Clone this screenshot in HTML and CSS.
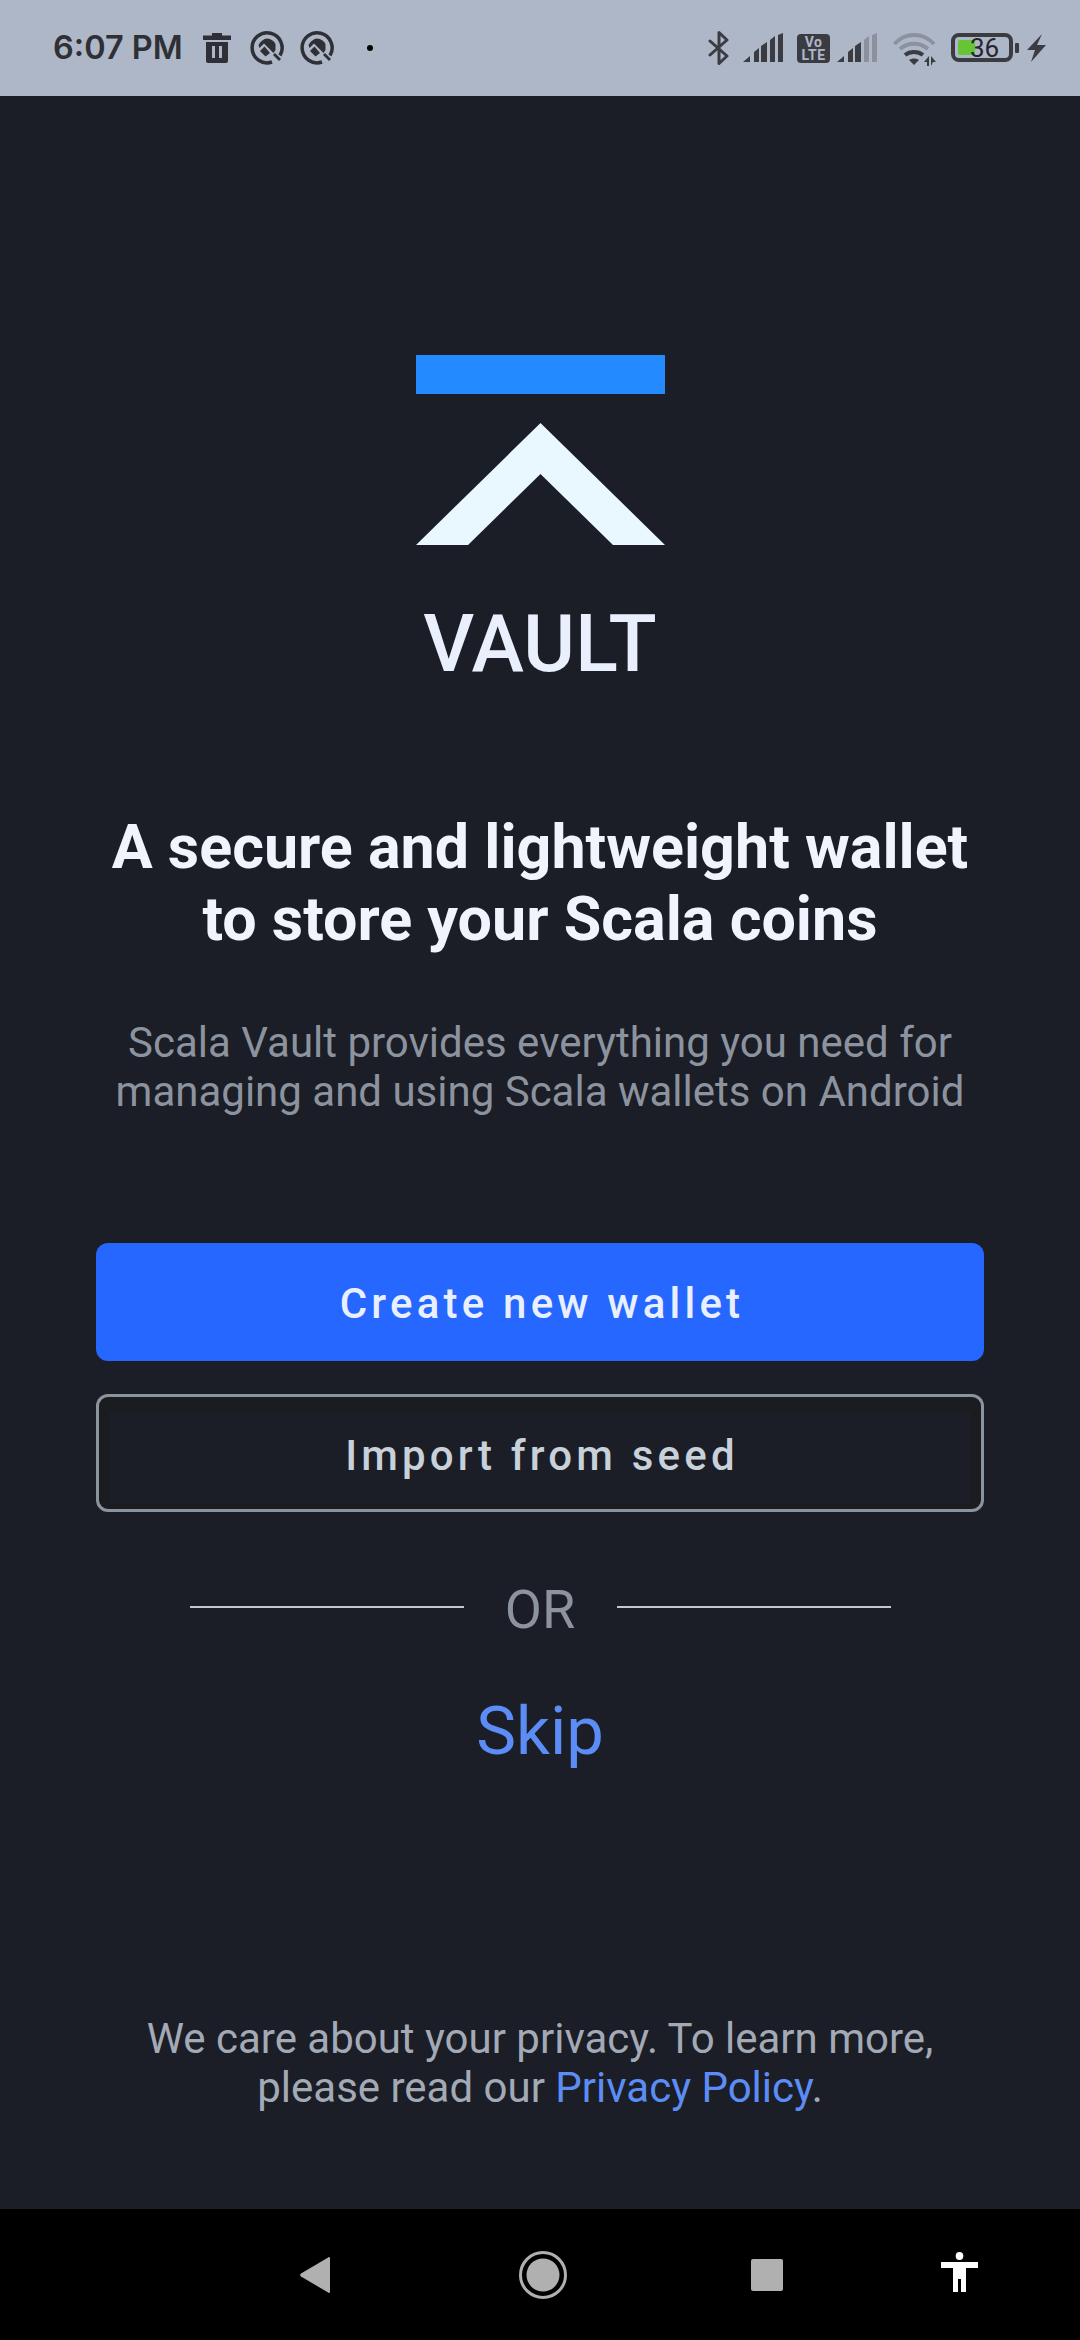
FILE: index.html
```html
<!DOCTYPE html>
<html lang="en">
<head>
<meta charset="utf-8">
<title>Scala Vault</title>
<link rel="stylesheet" href="styles.css">
</head>
<body>
<div class="phone">
  <header class="status">
    <div class="status-left">
      <span class="time">6:07 PM</span>
      <svg class="ic-trash" width="28" height="30" viewBox="0 0 28 30"><path fill="#2e3036" fill-rule="evenodd" d="M9 0h10v2.500h9v4.500H0V2.500h9zM3 9h22v19a2 2 0 0 1-2 2H5a2 2 0 0 1-2-2zm6 4v12h3V13zm7 0v12h3V13z"/></svg>
      <svg class="ic-q" width="34" height="34" viewBox="0 0 34 34"><use href="#q"/></svg>
      <svg class="ic-q2" width="34" height="34" viewBox="0 0 34 34"><use href="#q"/></svg>
      <span class="dot"></span>
    </div>
    <div class="status-right">
      <svg class="ic-bt" width="22" height="34" viewBox="0 0 22 34"><path fill="none" stroke="#3a3c42" stroke-width="3" stroke-linejoin="round" stroke-linecap="round" d="M2 10l17 15-8 7.500V1.500l8 7.500L2 24"/></svg>
      <svg class="ic-sig" width="40" height="29" viewBox="0 0 40 29"><path fill="#3a3c42" d="M0 29l7-6v6zM11 29V19l5-4v14zM18 29V13l6-4v20zM27 29V7l5-4v26zM35 29V2l5-2v29z"/></svg>
      <svg class="ic-volte" width="33" height="29" viewBox="0 0 33 29"><rect width="33" height="29" rx="4" fill="#3a3c42"/><text x="16.500" y="13" class="volte-t">Vo</text><text x="16.500" y="26" class="volte-t">LTE</text></svg>
      <svg class="ic-sig2" width="40" height="29" viewBox="0 0 40 29"><path fill="#3a3c42" d="M0 29l7-6v6zM11 29V19l5-4v14zM18 29V13l6-4v20z"/><path fill="#8c929d" d="M27 29V7l5-4v26zM35 29V2l5-2v29z"/></svg>
      <svg class="ic-wifi" width="43" height="33" viewBox="0 0 43 33"><path fill="none" stroke="#8c929d" stroke-width="4" d="M1.500 11C12-1 30-1 41 11"/><path fill="none" stroke="#8c929d" stroke-width="4" d="M7 16c8-7 20-7 28 0"/><path fill="none" stroke="#3a3c42" stroke-width="4" d="M12 22c5-4 13-4 18 0"/><path fill="#3a3c42" d="M21 32l-5-5c3-2 7-2 10 0z"/><path fill="#3a3c42" d="M36 23v10h-2v-4h-3zM38 33V23l5 6h-3z"/></svg>
      <div class="battery">
        <div class="battery-body"><span class="battery-fill"></span><span class="battery-num">36</span></div>
        <span class="battery-nub"></span>
      </div>
      <svg class="ic-bolt" width="19" height="28" viewBox="0 0 19 28"><path fill="#3a3c42" d="M15 0L0 16h8L4 28l15-17h-9z"/></svg>
    </div>
  </header>

  <main class="content">
    <svg class="logo" width="249" height="190" viewBox="0 0 249 190">
      <rect width="249" height="39" fill="#238bff"/>
      <path fill="#e9f7ff" d="M124.500 68L249 190h-52l-72.500-71-72.500 71H0z"/>
    </svg>
    <div class="brand">VAULT</div>
    <h1 class="title">A secure and lightweight wallet<br>to store your Scala coins</h1>
    <p class="sub">Scala Vault provides everything you need for<br>managing and using Scala wallets on Android</p>
    <button class="btn btn-primary">Create new wallet</button>
    <button class="btn btn-outline"><span class="btn-inner">Import from seed</span></button>
    <div class="or"><span class="rule"></span><span class="or-text">OR</span><span class="rule"></span></div>
    <a class="skip">Skip</a>
    <p class="privacy">We care about your privacy. To learn more,<br>please read our <a class="link">Privacy Policy</a>.</p>
  </main>

  <nav class="nav">
    <svg class="nav-back" width="30" height="36" viewBox="0 0 30 36"><path fill="#b0b0b0" d="M29 0a1 1 0 0 1 1 1v34a1 1 0 0 1-1 1L1 19.500a2 2 0 0 1 0-3z"/></svg>
    <svg class="nav-home" width="48" height="48" viewBox="0 0 48 48"><circle cx="24" cy="24" r="22.500" fill="none" stroke="#b0b0b0" stroke-width="3"/><circle cx="24" cy="24" r="16.500" fill="#b0b0b0"/></svg>
    <span class="nav-square"></span>
    <svg class="nav-a11y" width="37" height="40" viewBox="0 0 37 40"><ellipse cx="18.500" cy="4" rx="3.800" ry="4" fill="#fff"/><path fill="#fff" d="M0 10h37v6H25v24h-5V27h-3v13h-5V16H0z"/></svg>
  </nav>
</div>
<svg class="defs" width="0" height="0"><defs>
  <g id="q"><path fill="none" stroke="#2e3036" stroke-width="3.500" d="M22 31A15 15 0 1 1 30 24.500"/><path fill="#2e3036" d="M8.500 14Q12 8 17 7.500Q23 8 25.500 13V19L23.500 22L14 12.500L9.500 17z"/><path fill="#2e3036" d="M10 20l4.500-4.500L20 22l-4.500 3.500z"/><path fill="#2e3036" d="M23 24l2-2 6 6-2 2z"/></g>
</defs></svg>
</body>
</html>
```
FILE: styles.css
```css
* { box-sizing: border-box; }
html, body { margin: 0; padding: 0; }
body { width: 1080px; height: 2340px; overflow: hidden; background: #1b1e26; font-family: Roboto, "Noto Sans", sans-serif; }
.phone { display: flex; flex-direction: column; width: 1080px; height: 2340px; }
.defs { position: absolute; }

.status { flex: 0 0 96px; display: flex; justify-content: space-between; align-items: flex-start; background: #aeb7c8; padding: 0 34px 0 53px; }
.status-left, .status-right { display: flex; align-items: flex-start; }
.time { font-family: Inter, Roboto, sans-serif; font-size: 32.500px; font-weight: 600; color: #2e3036; line-height: 40px; margin-top: 28px; }
.ic-trash { margin: 33px 0 0 20px; }
.ic-q { margin: 31px 0 0 19px; }
.ic-q2 { margin: 31px 0 0 16px; }
.dot { width: 6px; height: 6px; border-radius: 50%; background: #000; margin: 45px 0 0 33px; }
.ic-bt { margin-top: 31px; }
.ic-sig { margin: 33px 0 0 13px; }
.ic-volte { margin: 34px 0 0 14px; }
.volte-t { font-family: Roboto, sans-serif; font-size: 14px; font-weight: 700; fill: #aeb7c8; text-anchor: middle; letter-spacing: 0.5px; }
.ic-sig2 { margin: 33px 0 0 7px; }
.ic-wifi { margin: 33px 0 0 16px; }
.battery { display: flex; align-items: center; margin: 33px 0 0 15px; height: 29px; }
.battery-body { position: relative; width: 62px; height: 29px; border: 4px solid #3a3c42; border-radius: 8px; }
.battery-fill { position: absolute; left: 3px; top: 3px; width: 17px; height: 15px; background: #66c535; border-radius: 2px; }
.battery-num { position: absolute; left: 15px; top: -3px; font-size: 26px; line-height: 29px; color: #24262b; }
.battery-nub { width: 4px; height: 10px; background: #3a3c42; margin-left: 2px; border-radius: 1px; }
.ic-bolt { margin: 34px 0 0 8px; }

.content { flex: 1; display: flex; flex-direction: column; align-items: center; padding-top: 259px; background: #1b1e26; }
.logo { display: block; }
.brand { font-family: Roboto, sans-serif; font-size: 79px; font-weight: 500; letter-spacing: 0.200px; line-height: 93px; margin-top: 53px; color: #e9effd; }
.title { margin: 120px 0 0; font-size: 61px; font-weight: 700; line-height: 72px; text-align: center; color: #f0f4fd; }
.sub { margin: 63px 0 0; font-size: 42px; line-height: 49px; text-align: center; color: #8c939f; }
.btn { display: block; width: 888px; height: 118px; font-family: Roboto, sans-serif; font-size: 42px; font-weight: 500; letter-spacing: 4.200px; padding: 0; }
.btn-primary { margin-top: 127px; border: 0; border-radius: 12px; background: #2567ff; color: #e9effd; padding: 3px 0 0 4px; }
.btn-outline { margin-top: 33px; border: 3px solid #8b939d; border-radius: 12px; background: #1a1c20; color: #c8d0da; padding: 15px 10px 5px; }
.btn-inner { display: flex; align-items: center; justify-content: center; height: 100%; padding: 0 0 5px 4px; background: #1b1e26; }
.or { display: flex; align-items: center; justify-content: center; margin-top: 62px; }
.rule { width: 274px; height: 2px; background: #c4c8ce; }
.or-text { width: 153px; padding-top: 6px; text-align: center; font-size: 54px; line-height: 60px; color: #8c939f; }
.skip { font-size: 67px; line-height: 78px; margin-top: 52px; color: #5c8df6; }
.privacy { margin: 244px 0 0; font-size: 42px; line-height: 49px; text-align: center; color: #a3aab6; }
.link { color: #5c8df6; }

.nav { flex: 0 0 131px; display: flex; align-items: flex-start; background: #000; padding-left: 300px; }
.nav-back { margin-top: 48px; }
.nav-home { margin: 42px 0 0 189px; }
.nav-square { width: 32px; height: 32px; background: #b0b0b0; border-radius: 2px; margin: 50px 0 0 184px; }
.nav-a11y { margin: 43px 0 0 158px; }
```
